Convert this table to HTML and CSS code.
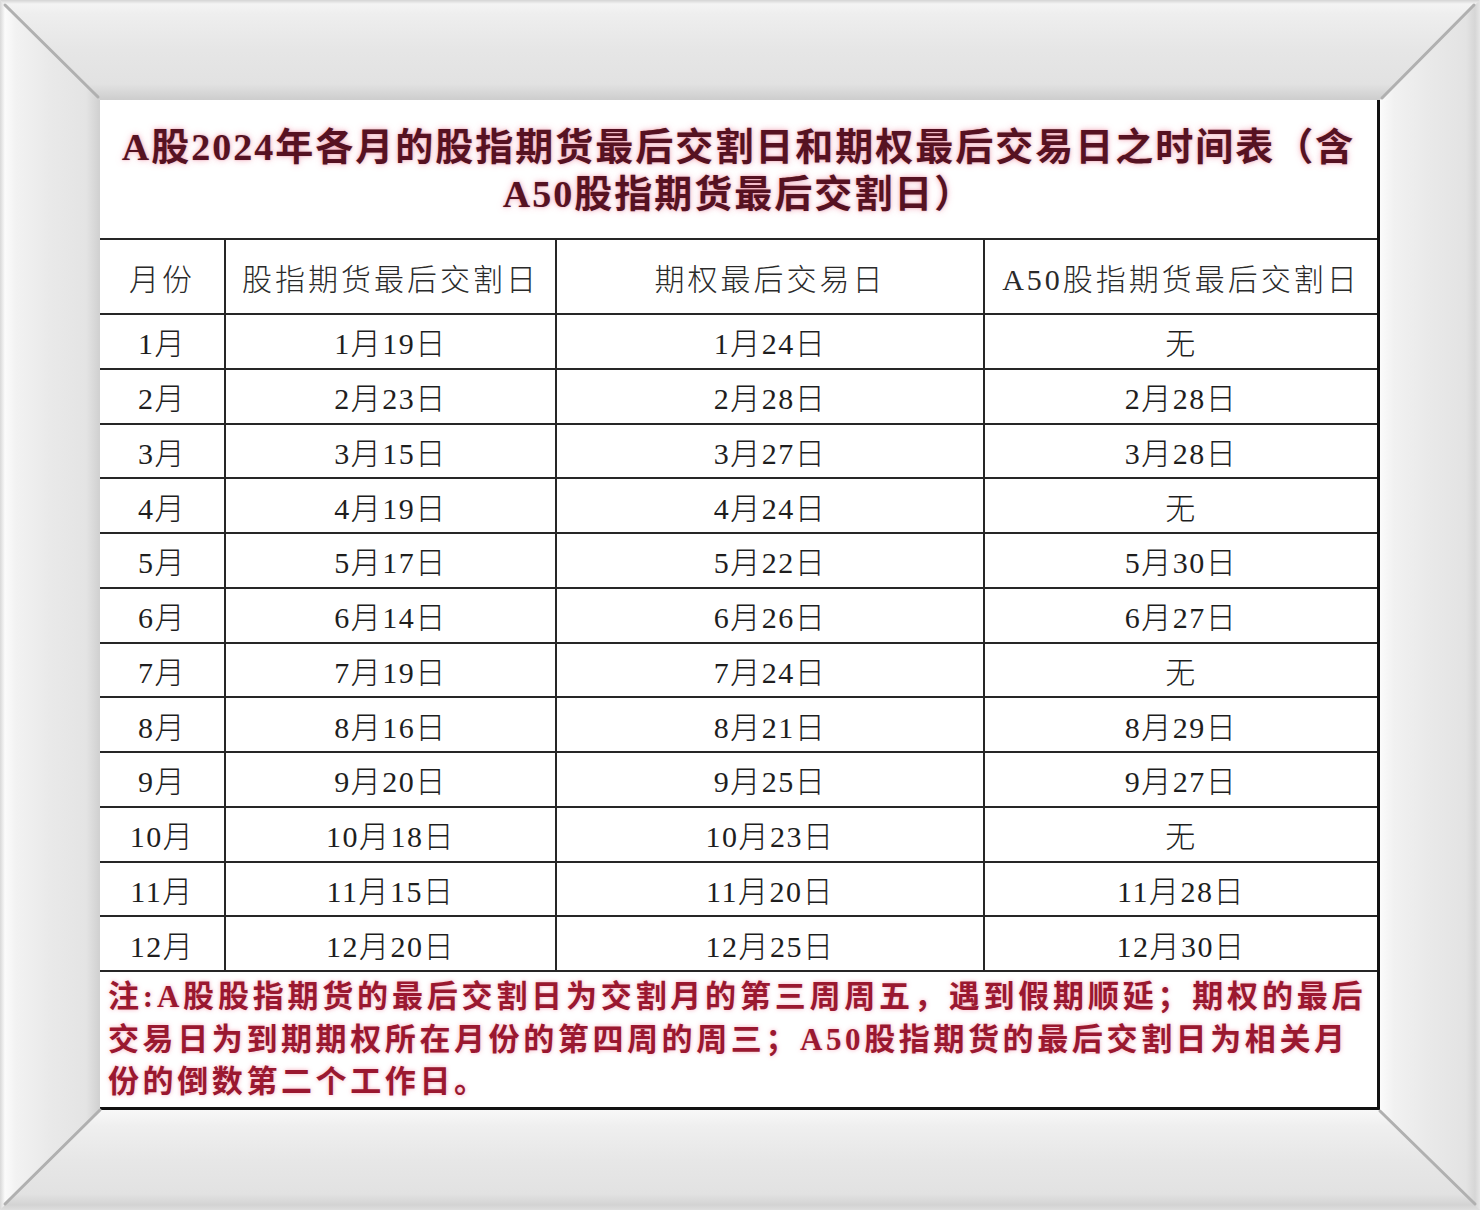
FILE: index.html
```html
<!DOCTYPE html>
<html lang="zh-CN">
<head>
<meta charset="utf-8">
<title>A股2024年各月的股指期货最后交割日和期权最后交易日之时间表</title>
<link rel="stylesheet" href="styles.css">
</head>
<body>
<div class="frame">
  <svg class="bevel" width="1480" height="1210" viewBox="0 0 1480 1210" aria-hidden="true">
    <defs>
      <linearGradient id="gt" gradientUnits="userSpaceOnUse" x1="0" y1="0" x2="0" y2="100">
        <stop offset="0" stop-color="#d4d4d4"/>
        <stop offset="0.04" stop-color="#f4f4f4"/>
        <stop offset="0.14" stop-color="#eeeeee"/>
        <stop offset="0.5" stop-color="#e6e6e6"/>
        <stop offset="0.84" stop-color="#e2e2e2"/>
        <stop offset="1" stop-color="#cdcdcd"/>
      </linearGradient>
      <linearGradient id="gl" gradientUnits="userSpaceOnUse" x1="0" y1="0" x2="100" y2="0">
        <stop offset="0" stop-color="#d8d8d8"/>
        <stop offset="0.05" stop-color="#fbfbfb"/>
        <stop offset="0.16" stop-color="#f2f2f2"/>
        <stop offset="0.5" stop-color="#e9e9e9"/>
        <stop offset="0.86" stop-color="#e4e4e4"/>
        <stop offset="1" stop-color="#d0d0d0"/>
      </linearGradient>
      <linearGradient id="gr" gradientUnits="userSpaceOnUse" x1="1380" y1="0" x2="1480" y2="0">
        <stop offset="0" stop-color="#fbfbfb"/>
        <stop offset="0.14" stop-color="#f1f1f1"/>
        <stop offset="0.5" stop-color="#e9e9e9"/>
        <stop offset="0.86" stop-color="#e3e3e3"/>
        <stop offset="0.95" stop-color="#d6d6d6"/>
        <stop offset="1" stop-color="#e6e6e6"/>
      </linearGradient>
      <linearGradient id="gb" gradientUnits="userSpaceOnUse" x1="0" y1="1110" x2="0" y2="1210">
        <stop offset="0" stop-color="#f8f8f8"/>
        <stop offset="0.16" stop-color="#efefef"/>
        <stop offset="0.5" stop-color="#e7e7e7"/>
        <stop offset="0.84" stop-color="#e2e2e2"/>
        <stop offset="0.95" stop-color="#d3d3d3"/>
        <stop offset="1" stop-color="#dedede"/>
      </linearGradient>
    </defs>
    <polygon points="0,0 1480,0 1380,100 100,100" fill="url(#gt)"/>
    <polygon points="0,0 100,100 100,1110 0,1210" fill="url(#gl)"/>
    <polygon points="1480,0 1480,1210 1380,1110 1380,100" fill="url(#gr)"/>
    <polygon points="0,1210 100,1110 1380,1110 1480,1210" fill="url(#gb)"/>
    <g stroke="#b0b0b0" stroke-width="3" stroke-linecap="round">
      <line x1="5" y1="5" x2="98" y2="97"/>
      <line x1="1474" y1="5" x2="1382" y2="98"/>
      <line x1="5" y1="1204" x2="100" y2="1110"/>
      <line x1="1380" y1="1111" x2="1475" y2="1204"/>
    </g>
  </svg>

  <div class="sheet">
    <div class="title">
      <div class="title-line">A股2024年各月的股指期货最后交割日和期权最后交易日之时间表（含</div>
      <div class="title-line">A50股指期货最后交割日）</div>
    </div>

    <table class="grid">
      <colgroup>
        <col class="c1"><col class="c2"><col class="c3"><col class="c4">
      </colgroup>
      <thead>
        <tr class="head">
          <th>月份</th>
          <th>股指期货最后交割日</th>
          <th>期权最后交易日</th>
          <th>A50股指期货最后交割日</th>
        </tr>
      </thead>
      <tbody>
        <tr><td>1月</td><td>1月19日</td><td>1月24日</td><td>无</td></tr>
        <tr><td>2月</td><td>2月23日</td><td>2月28日</td><td>2月28日</td></tr>
        <tr><td>3月</td><td>3月15日</td><td>3月27日</td><td>3月28日</td></tr>
        <tr><td>4月</td><td>4月19日</td><td>4月24日</td><td>无</td></tr>
        <tr><td>5月</td><td>5月17日</td><td>5月22日</td><td>5月30日</td></tr>
        <tr><td>6月</td><td>6月14日</td><td>6月26日</td><td>6月27日</td></tr>
        <tr><td>7月</td><td>7月19日</td><td>7月24日</td><td>无</td></tr>
        <tr><td>8月</td><td>8月16日</td><td>8月21日</td><td>8月29日</td></tr>
        <tr><td>9月</td><td>9月20日</td><td>9月25日</td><td>9月27日</td></tr>
        <tr><td>10月</td><td>10月18日</td><td>10月23日</td><td>无</td></tr>
        <tr><td>11月</td><td>11月15日</td><td>11月20日</td><td>11月28日</td></tr>
        <tr><td>12月</td><td>12月20日</td><td>12月25日</td><td>12月30日</td></tr>
      </tbody>
    </table>

    <div class="note">
      <span class="note-line l1">注:A股股指期货的最后交割日为交割月的第三周周五，遇到假期顺延；期权的最后</span>
      <span class="note-line l2">交易日为到期期权所在月份的第四周的周三；A50股指期货的最后交割日为相关月</span>
      <span class="note-line l3">份的倒数第二个工作日。</span>
    </div>
  </div>
</div>
</body>
</html>
```

FILE: styles.css
```css
* { box-sizing: border-box; }

html, body {
  margin: 0;
  padding: 0;
  background: #e6e6e6;
}

body {
  width: 1480px;
  height: 1210px;
  overflow: hidden;
  font-family: "Liberation Serif", "Noto Sans CJK SC", serif;
}

.frame {
  position: relative;
  width: 1480px;
  height: 1210px;
  padding: 100px;
  border: 0;
}

.bevel {
  position: absolute;
  left: 0;
  top: 0;
  pointer-events: none;
}

.sheet {
  width: 1280px;
  height: 1010px;
  background: #ffffff;
  border-right: 3px solid #111111;
  border-bottom: 3px solid #111111;
  display: flex;
  flex-direction: column;
}

.title {
  height: 138px;
  padding-top: 24px;
  text-align: center;
  font-size: 38px;
  line-height: 47px;
  font-weight: 700;
  letter-spacing: 2px;
  color: #561222;
  text-shadow: 0 0 6px rgba(235, 110, 140, 0.55), 0 0 2px rgba(200, 60, 90, 0.35);
}

.title-line {
  white-space: nowrap;
}

.grid {
  width: 1277px;
  border-collapse: collapse;
  table-layout: fixed;
  color: #1e1e1e;
  font-size: 30px;
  font-weight: 300;
}

.c1 { width: 125px; }
.c2 { width: 331px; }
.c3 { width: 428px; }
.c4 { width: 393px; }

.grid th,
.grid td {
  border: 2px solid #262626;
  padding: 0;
  text-align: center;
  vertical-align: middle;
  white-space: nowrap;
}

.grid th:first-child,
.grid td:first-child {
  border-left: 0;
}

.grid th:last-child,
.grid td:last-child {
  border-right: 0;
}

.grid th {
  font-weight: 300;
  letter-spacing: 3px;
  color: #2a2a2a;
}

.grid td {
  letter-spacing: 1.5px;
}

.head {
  height: 75px;
}

.grid tbody tr {
  height: 54.75px;
}

.note {
  flex: 1;
  padding: 4px 0 0 8px;
  font-size: 31px;
  line-height: 42.5px;
  font-weight: 700;
  color: #9a1830;
  text-shadow: 0 0 4px rgba(240, 110, 140, 0.55);
}

.note-line {
  display: block;
  white-space: nowrap;
}

.l1 { letter-spacing: 3.8px; }
.l2 { letter-spacing: 3.6px; }
.l3 { letter-spacing: 3.6px; }
```
